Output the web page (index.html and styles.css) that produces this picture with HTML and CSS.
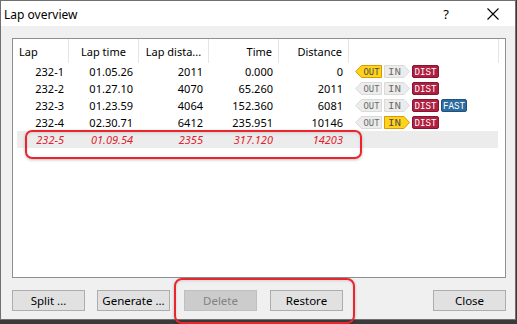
FILE: index.html
```html
<!DOCTYPE html>
<html>
<head>
<meta charset="utf-8">
<link rel="stylesheet" href="styles.css">
</head>
<body>
<div class="window">
  <div class="titlebar">
    <span class="title">Lap overview</span>
    <span class="help">?</span>
    <svg class="xbtn" width="12" height="12" viewBox="0 0 12 12"><path d="M0.5 0.5 L11.5 11.5 M11.5 0.5 L0.5 11.5" stroke="#000" stroke-width="1.1" fill="none"/></svg>
  </div>
  <div class="body">
    <div class="list">
      <div class="hdr">
        <div class="hc c1 left">Lap</div>
        <div class="hc c2 center">Lap time</div>
        <div class="hc c3 center">Lap dista...</div>
        <div class="hc c4 right">Time</div>
        <div class="hc c5 right">Distance</div>
        <div class="hc c6"></div>
      </div>

      <div class="row">
        <div class="c c1">232-1</div><div class="c c2">01.05.26</div><div class="c c3">2011</div><div class="c c4">0.000</div><div class="c c5">0</div>
        <div class="c c6 tags">
          <svg class="tag" width="27" height="13" viewBox="0 0 27 13"><polygon points="0.7,6.5 6.5,0.5 26.5,0.5 26.5,12.5 6.5,12.5" fill="#ffd21c" stroke="#d69b00"/><text x="16.5" y="10.2" textLength="16" lengthAdjust="spacingAndGlyphs" class="tt dark">OUT</text></svg>
          <svg class="tag" width="26" height="13" viewBox="0 0 26 13"><polygon points="0.5,0.5 20,0.5 25.5,6.5 20,12.5 0.5,12.5" fill="#ececec" stroke="#dadada"/><text x="10.5" y="10.2" textLength="13" lengthAdjust="spacingAndGlyphs" class="tt grey">IN</text></svg>
          <svg class="tag" width="27" height="13" viewBox="0 0 27 13"><rect x="0.5" y="0.5" width="26" height="12" rx="1.5" fill="#ae1f40" stroke="#86152f"/><text x="13.5" y="10.2" textLength="22" lengthAdjust="spacingAndGlyphs" class="tt white">DIST</text></svg>
        </div>
      </div>
      <div class="row">
        <div class="c c1">232-2</div><div class="c c2">01.27.10</div><div class="c c3">4070</div><div class="c c4">65.260</div><div class="c c5">2011</div>
        <div class="c c6 tags">
          <svg class="tag" width="27" height="13" viewBox="0 0 27 13"><polygon points="0.7,6.5 6.5,0.5 26.5,0.5 26.5,12.5 6.5,12.5" fill="#ececec" stroke="#dadada"/><text x="16.5" y="10.2" textLength="16" lengthAdjust="spacingAndGlyphs" class="tt grey">OUT</text></svg>
          <svg class="tag" width="26" height="13" viewBox="0 0 26 13"><polygon points="0.5,0.5 20,0.5 25.5,6.5 20,12.5 0.5,12.5" fill="#ececec" stroke="#dadada"/><text x="10.5" y="10.2" textLength="13" lengthAdjust="spacingAndGlyphs" class="tt grey">IN</text></svg>
          <svg class="tag" width="27" height="13" viewBox="0 0 27 13"><rect x="0.5" y="0.5" width="26" height="12" rx="1.5" fill="#ae1f40" stroke="#86152f"/><text x="13.5" y="10.2" textLength="22" lengthAdjust="spacingAndGlyphs" class="tt white">DIST</text></svg>
        </div>
      </div>
      <div class="row">
        <div class="c c1">232-3</div><div class="c c2">01.23.59</div><div class="c c3">4064</div><div class="c c4">152.360</div><div class="c c5">6081</div>
        <div class="c c6 tags">
          <svg class="tag" width="27" height="13" viewBox="0 0 27 13"><polygon points="0.7,6.5 6.5,0.5 26.5,0.5 26.5,12.5 6.5,12.5" fill="#ececec" stroke="#dadada"/><text x="16.5" y="10.2" textLength="16" lengthAdjust="spacingAndGlyphs" class="tt grey">OUT</text></svg>
          <svg class="tag" width="26" height="13" viewBox="0 0 26 13"><polygon points="0.5,0.5 20,0.5 25.5,6.5 20,12.5 0.5,12.5" fill="#ececec" stroke="#dadada"/><text x="10.5" y="10.2" textLength="13" lengthAdjust="spacingAndGlyphs" class="tt grey">IN</text></svg>
          <svg class="tag" width="27" height="13" viewBox="0 0 27 13"><rect x="0.5" y="0.5" width="26" height="12" rx="1.5" fill="#ae1f40" stroke="#86152f"/><text x="13.5" y="10.2" textLength="22" lengthAdjust="spacingAndGlyphs" class="tt white">DIST</text></svg>
          <svg class="tag" width="26" height="13" viewBox="0 0 26 13"><rect x="0.5" y="0.5" width="25" height="12" rx="1.5" fill="#2d6c9f" stroke="#1f5280"/><text x="13" y="10.2" textLength="22" lengthAdjust="spacingAndGlyphs" class="tt white">FAST</text></svg>
        </div>
      </div>
      <div class="row">
        <div class="c c1">232-4</div><div class="c c2">02.30.71</div><div class="c c3">6412</div><div class="c c4">235.951</div><div class="c c5">10146</div>
        <div class="c c6 tags">
          <svg class="tag" width="27" height="13" viewBox="0 0 27 13"><polygon points="0.7,6.5 6.5,0.5 26.5,0.5 26.5,12.5 6.5,12.5" fill="#ececec" stroke="#dadada"/><text x="16.5" y="10.2" textLength="16" lengthAdjust="spacingAndGlyphs" class="tt grey">OUT</text></svg>
          <svg class="tag" width="26" height="13" viewBox="0 0 26 13"><polygon points="0.5,0.5 20,0.5 25.5,6.5 20,12.5 0.5,12.5" fill="#ffd21c" stroke="#d69b00"/><text x="10.5" y="10.2" textLength="13" lengthAdjust="spacingAndGlyphs" class="tt dark">IN</text></svg>
          <svg class="tag" width="27" height="13" viewBox="0 0 27 13"><rect x="0.5" y="0.5" width="26" height="12" rx="1.5" fill="#ae1f40" stroke="#86152f"/><text x="13.5" y="10.2" textLength="22" lengthAdjust="spacingAndGlyphs" class="tt white">DIST</text></svg>
        </div>
      </div>
      <div class="row deleted">
        <div class="c c1">232-5</div><div class="c c2">01.09.54</div><div class="c c3">2355</div><div class="c c4">317.120</div><div class="c c5">14203</div>
        <div class="c c6 tags"></div>
      </div>

      <div class="mark-row"></div>
    </div>

    <div class="buttons">
      <button class="btn b-split">Split ...</button>
      <button class="btn b-gen">Generate ...</button>
      <button class="btn b-del" disabled>Delete</button>
      <button class="btn b-res">Restore</button>
      <button class="btn b-close">Close</button>
    </div>
  </div>
  <div class="mark-btns"></div>
</div>
</body>
</html>
```

FILE: styles.css
```css
html, body {
  margin: 0;
  padding: 0;
  background: #3a3a3a;
  width: 517px;
  height: 324px;
  overflow: hidden;
}

.window {
  position: relative;
  width: 516px;
  height: 320px;
  box-sizing: border-box;
  border: 1px solid #707070;
  background: #f0f0f0;
  font-family: "Noto Sans", "Open Sans", sans-serif;
  font-size: 11px;
  color: #000;
  display: flex;
  flex-direction: column;
}

.titlebar {
  height: 25px;
  background: #fff;
  display: flex;
  align-items: center;
  flex: none;
}

.title {
  font-size: 12px;
  margin-left: 3px;
  flex: 1;
  margin-top: 1px;
}

.help {
  font-size: 13px;
  width: 12px;
  text-align: center;
  margin-right: 35px;
  margin-top: 1px;
}

.xbtn {
  margin-right: 16px;
  margin-top: 1px;
}

.body {
  flex: 1;
  padding: 12px 8px 0 11px;
  display: flex;
  flex-direction: column;
}

.list {
  position: relative;
  width: 494px;
  height: 240px;
  box-sizing: border-box;
  border: 1px solid #8c8f96;
  background: #fff;
}

.hdr {
  display: flex;
  height: 24px;
}

.hc {
  box-sizing: border-box;
  border-right: 1px solid #e5e5e5;
  display: flex;
  align-items: center;
  padding: 0 6px;
  height: 24px;
}

.hc.left { justify-content: flex-start; }
.hc.center { justify-content: center; padding: 0 2px; }
.hc.right { justify-content: flex-end; }

.c1 { width: 56px; flex: none; }
.c2, .c3, .c4, .c5 { width: 70px; flex: none; }
.c6 { width: 150px; flex: none; }

.row {
  display: flex;
  height: 17px;
  align-items: center;
}

.c {
  box-sizing: border-box;
  text-align: right;
  padding-right: 6px;
  white-space: nowrap;
}

.c.c1 { padding-right: 5px; }

.tags {
  display: flex;
  align-items: center;
  padding-left: 6px;
  gap: 2px;
}

.tag { display: block; flex: none; }
.tag + .tag { margin-left: 0; }

.tt {
  font-family: "Liberation Mono", "DejaVu Sans Mono", monospace;
  font-size: 10.5px;
  text-anchor: middle;
}
.tt.dark { fill: #4b4b4b; }
.tt.grey { fill: #6a6a6a; }
.tt.white { fill: #ffffff; }

.row.deleted {
  color: #e0202e;
  font-style: italic;
  background: linear-gradient(to right, transparent 4px, #ececec 4px, #ececec 485px, transparent 485px);
}

.mark-row {
  position: absolute;
  left: 12px;
  top: 91px;
  width: 337px;
  height: 29px;
  box-sizing: border-box;
  border: 2px solid #e8262c;
  border-radius: 7px;
  box-shadow: 0 1px 3px rgba(0,0,0,0.25), inset 0 1px 3px rgba(0,0,0,0.12);
}

.buttons {
  display: flex;
  margin-top: 12px;
}

.btn {
  width: 73px;
  height: 21px;
  box-sizing: border-box;
  border: 1px solid #adadad;
  background: #e1e1e1;
  font-family: "Noto Sans", "Open Sans", sans-serif;
  font-size: 11.5px;
  color: #000;
  padding: 0;
  margin: 0;
  line-height: 18px;
}

.b-gen { margin-left: 12px; }
.b-del { margin-left: 14px; background: #cccccc; border-color: #bfbfbf; color: #838383; }
.b-res { margin-left: 13px; }
.b-close { margin-left: auto; margin-right: 1px; }

.mark-btns {
  position: absolute;
  left: 173px;
  top: 277px;
  width: 181px;
  height: 46px;
  box-sizing: border-box;
  border: 2px solid #e8262c;
  border-radius: 8px;
  box-shadow: 0 1px 3px rgba(0,0,0,0.25), inset 0 1px 3px rgba(0,0,0,0.12);
}
```
